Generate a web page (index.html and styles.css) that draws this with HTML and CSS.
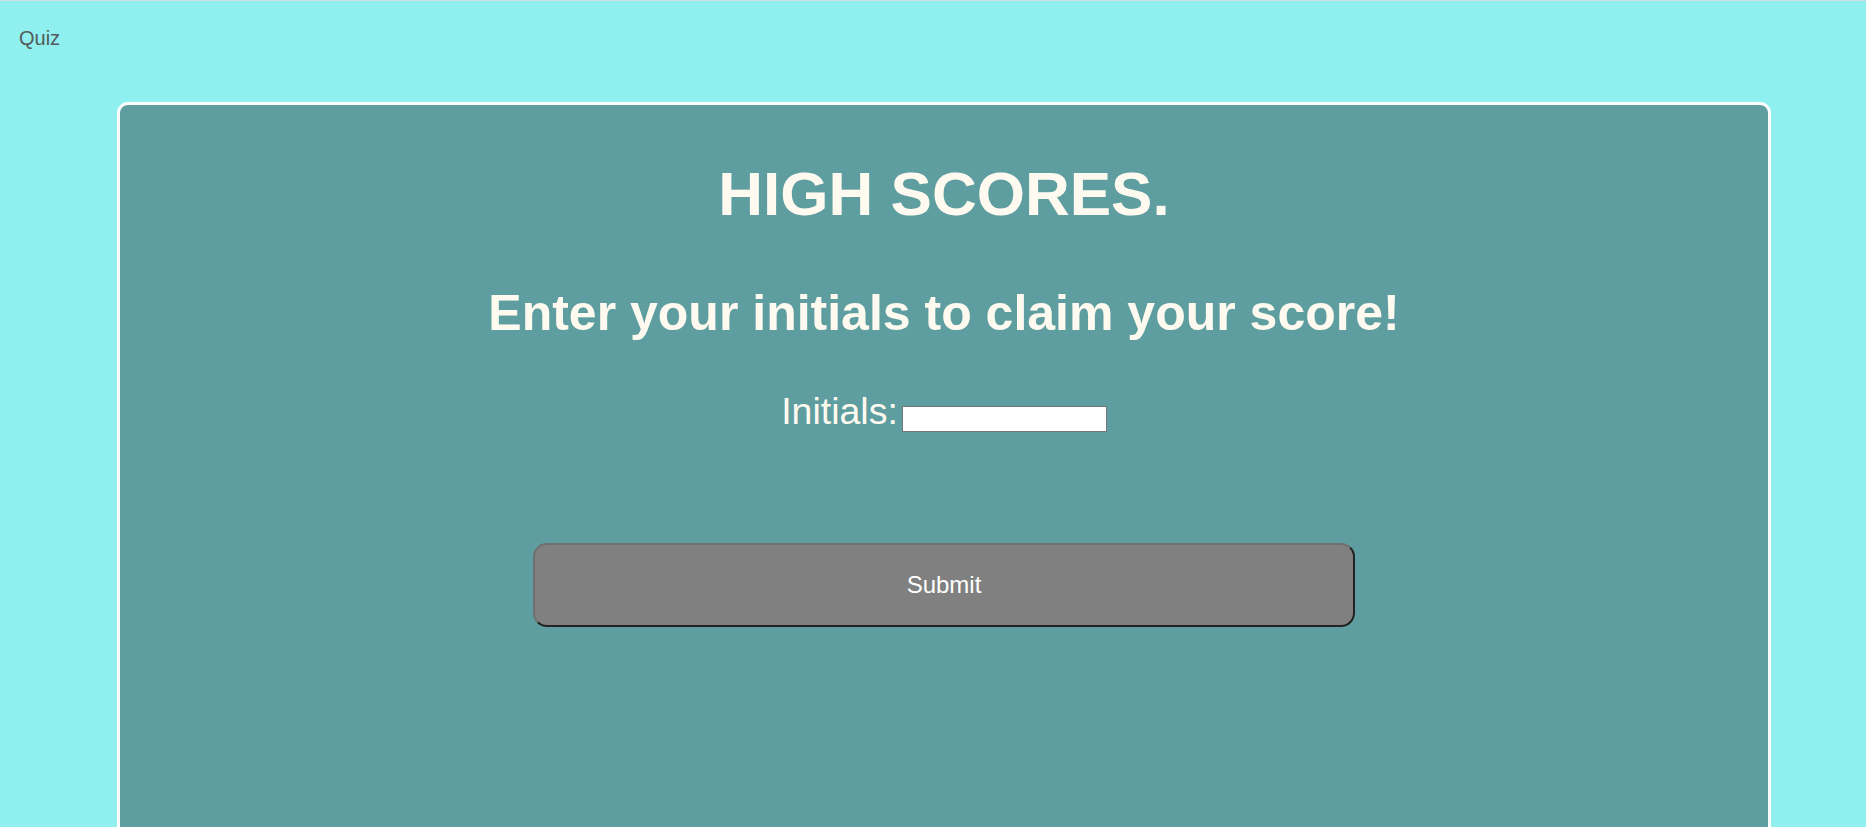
FILE: index.html
```html
<!DOCTYPE html>
<html lang="en">
<head>
<meta charset="utf-8">
<title>Quiz</title>
<link rel="stylesheet" href="styles.css">
</head>
<body>
<header class="top-bar">
  <span class="brand">Quiz</span>
</header>
<main class="card">
  <h1 class="title">HIGH SCORES.</h1>
  <h2 class="subtitle">Enter your initials to claim your score!</h2>
  <div class="initials-row">
    <label class="initials-label" for="initials">Initials:</label>
    <input class="initials-input" id="initials" type="text">
  </div>
  <button class="submit-btn" type="button">Submit</button>
</main>
</body>
</html>
```

FILE: styles.css
```css
html {
  background: #8ff0ef;
}

body {
  margin: 0;
  border-top: 1px solid #d4dde1;
  font-family: "Liberation Sans", Arial, sans-serif;
  background: #8ff0ef;
  min-height: 900px;
}

.top-bar {
  padding: 26px 19px 0;
  height: 22px;
  line-height: 23px;
}

.brand {
  font-size: 20px;
  color: #555a5a;
}

.card {
  margin: 53px 95px 0 117px;
  border: 3px solid #ffffff;
  border-radius: 11px;
  background: #5f9ea0;
  min-height: 900px;
  display: flex;
  flex-direction: column;
  align-items: center;
  color: #fffaf0;
}

.title {
  margin: 53px 0 0;
  font-size: 62px;
  font-weight: bold;
  line-height: 71px;
}

.subtitle {
  margin: 56px 0 0;
  font-size: 50px;
  font-weight: bold;
  line-height: 57px;
}

.initials-row {
  margin-top: 47px;
  display: flex;
  align-items: flex-end;
  gap: 4px;
  height: 44px;
}

.initials-label {
  font-size: 37.5px;
  line-height: 44px;
}

.initials-input {
  box-sizing: border-box;
  width: 205px;
  height: 26px;
  margin: 0 0 1px;
  border: 1px solid #767676;
  background: #ffffff;
  padding: 1px 2px;
}

.submit-btn {
  margin-top: 110px;
  box-sizing: border-box;
  width: 822px;
  height: 84px;
  border: 2px solid;
  border-color: #707070 #222222 #222222 #707070;
  border-radius: 14px;
  background: #808080;
  color: #ffffff;
  font-family: "Liberation Sans", Arial, sans-serif;
  font-size: 24px;
}
```
